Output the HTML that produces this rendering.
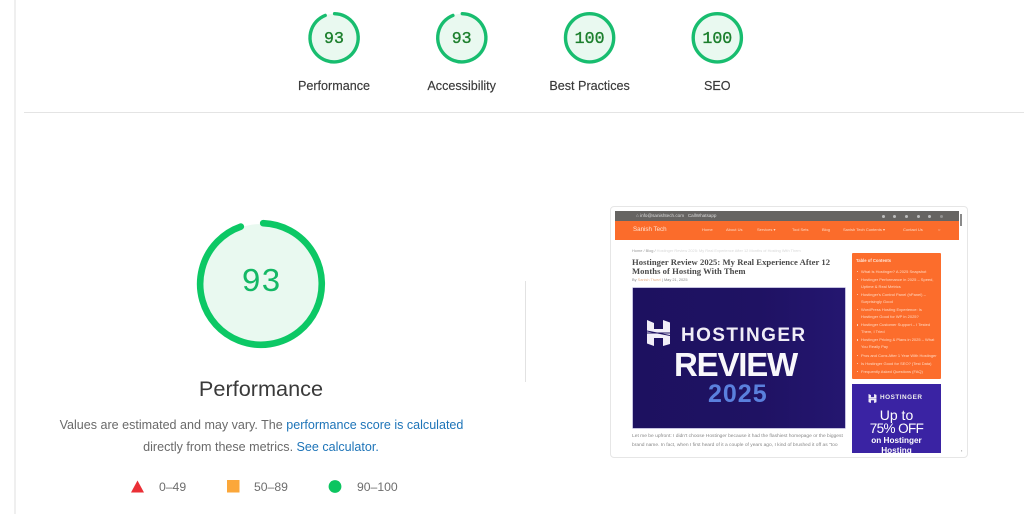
<!DOCTYPE html>
<html lang="en">
<head>
<meta charset="utf-8">
<title>Lighthouse scores</title>
<style>
html,body{margin:0;padding:0;background:#fff;width:1024px;height:514px;overflow:hidden}
body{position:relative;font-family:"Liberation Sans",sans-serif}
.a{position:absolute;white-space:nowrap}
.c{transform:translateX(-50%);text-align:center}
.lbl{font-size:12.6px;color:#3a3a3a;top:78px;line-height:16px;-webkit-text-stroke:.15px #3a3a3a}
.score{font-family:"Liberation Mono",monospace;font-size:16.6px;color:#1b7f2c;top:28px;line-height:20px;-webkit-text-stroke:.35px #1b7f2c}
.leg{font-size:12.2px;color:#6e6e6e;top:479px;line-height:16px}
.p{font-size:12.55px;color:#6a6a6a;line-height:20px}
.p span{color:#1d74b8}
#shot{position:absolute;left:610px;top:206px;width:356px;height:250px;border:1px solid #e6e6e6;border-radius:4px;background:#fff;overflow:hidden}
#in{position:absolute;left:-611px;top:-207px;width:1024px;height:514px;filter:blur(.35px)}
#in .a{line-height:1}
ul{position:absolute;margin:0;padding:0;list-style:none;left:857px;top:267.5px;width:80px;color:#ffd9c2;font-size:4px;line-height:7px}
li{padding-left:4px;margin-bottom:1.2px;position:relative}
li:before{content:"";position:absolute;left:0;top:3px;width:1.4px;height:1.4px;border-radius:50%;background:#ffe2cf}
.ic{position:absolute;top:214.5px;width:3px;height:3px;border-radius:50%;background:#bdbdbd}
</style>
</head>
<body>
<div class="a" style="left:14px;top:0;width:2px;height:514px;background:#efefef"></div>
<div class="a" style="left:24px;top:112px;width:1000px;height:1px;background:#e4e4e4"></div>
<div class="a" style="left:525px;top:281px;width:1px;height:101px;background:#e2e2e2"></div>

<svg class="a" style="left:0;top:0" width="1024" height="514" viewBox="0 0 1024 514">
  <g fill="#e9f9f0" stroke="none">
    <circle cx="334" cy="37.8" r="24"/><circle cx="461.7" cy="37.8" r="24"/><circle cx="589.6" cy="37.8" r="24"/><circle cx="717.3" cy="37.8" r="24"/>
    <circle cx="261" cy="284" r="60"/>
  </g>
  <g fill="none" stroke="#18bd6f" stroke-width="3.4" stroke-linecap="round">
    <path d="M334.6 13.7A24.1 24.1 0 1 1 325.2 15.4"/>
    <path d="M462.3 13.7A24.1 24.1 0 1 1 452.9 15.4"/>
    <circle cx="589.6" cy="37.8" r="24.1"/>
    <circle cx="717.3" cy="37.8" r="24.1"/>
  </g>
  <path d="M263.2 223.2A60.8 60.8 0 1 1 240.8 226.6" fill="none" stroke="#0cc865" stroke-width="6.6" stroke-linecap="round"/>
  <polygon points="137.5,480.5 144,492.5 131,492.5" fill="#ea2f36"/>
  <rect x="227" y="480" width="12.5" height="12.5" fill="#fba73a"/>
  <circle cx="335" cy="486.5" r="6.4" fill="#0cc560"/>
</svg>

<div class="a c score" style="left:334px;top:29px">93</div>
<div class="a c score" style="left:461.7px;top:29px">93</div>
<div class="a c score" style="left:589.6px;top:29px">100</div>
<div class="a c score" style="left:717.3px;top:29px">100</div>
<div class="a c lbl" style="left:334px">Performance</div>
<div class="a c lbl" style="left:461.7px">Accessibility</div>
<div class="a c lbl" style="left:589.6px">Best Practices</div>
<div class="a c lbl" style="left:717.3px">SEO</div>

<div class="a c" style="left:261px;top:264px;font-family:'Liberation Mono',monospace;font-size:33px;line-height:38px;color:#14b865">93</div>
<div class="a c" style="left:261px;top:376px;font-size:21.7px;line-height:26px;color:#3a3a3a">Performance</div>
<div class="a c p" style="left:261.5px;top:415px">Values are estimated and may vary. The <span>performance score is calculated</span></div>
<div class="a c p" style="left:261px;top:437px">directly from these metrics. <span>See calculator.</span></div>
<div class="a leg" style="left:159px">0–49</div>
<div class="a leg" style="left:254px">50–89</div>
<div class="a leg" style="left:357px">90–100</div>

<div id="shot"><div id="in">
  <div class="a" style="left:615px;top:211px;width:344px;height:10px;background:#666462"></div>
  <div class="a" style="left:615px;top:221px;width:344px;height:19px;background:#fb6c2b"></div>
  <div class="a" style="left:960px;top:214px;width:2px;height:12px;background:#8a8a8a"></div>
  <div class="a" style="left:636px;top:213.5px;font-size:4.6px;color:#dcdcdc">⌂ info@sanishtech.com &nbsp; CallWhatsapp</div>
  <div class="ic" style="left:882px"></div><div class="ic" style="left:893px"></div><div class="ic" style="left:905px"></div><div class="ic" style="left:917px"></div><div class="ic" style="left:928px"></div><div class="ic" style="left:940px;opacity:.5"></div>
  <div class="a" style="left:633px;top:227px;font-size:6.2px;color:#ffe3d2">Sanish Tech</div>
  <div class="a" style="left:702px;top:228px;font-size:4px;color:#ffd9c2">Home</div>
  <div class="a" style="left:726px;top:228px;font-size:4px;color:#ffd9c2">About Us</div>
  <div class="a" style="left:757px;top:228px;font-size:4px;color:#ffd9c2">Services ▾</div>
  <div class="a" style="left:792px;top:228px;font-size:4px;color:#ffd9c2">Tool Sets</div>
  <div class="a" style="left:822px;top:228px;font-size:4px;color:#ffd9c2">Blog</div>
  <div class="a" style="left:843px;top:228px;font-size:4px;color:#ffd9c2">Sanish Tech Contents ▾</div>
  <div class="a" style="left:903px;top:228px;font-size:4px;color:#ffd9c2">Contact Us</div>
  <div class="a" style="left:938px;top:228px;font-size:4px;color:#ffd9c2">○</div>

  <div class="a" style="left:632px;top:249px;font-size:3.9px;color:#999">Home / Blog / <span style="color:#d8d8d8">Hostinger Review 2025: My Real Experience After 12 Months of Hosting With Them</span></div>
  <div class="a" style="left:632px;top:258px;font-family:'Liberation Serif',serif;font-weight:700;font-size:8.6px;letter-spacing:.05px;color:#4a4a4a">Hostinger Review 2025: My Real Experience After 12</div>
  <div class="a" style="left:632px;top:267px;font-family:'Liberation Serif',serif;font-weight:700;font-size:8.6px;letter-spacing:.05px;color:#4a4a4a">Months of Hosting With Them</div>
  <div class="a" style="left:632px;top:278px;font-size:3.9px;color:#888">By <span style="color:#e8b58f">Sanish Tiwari</span> | May 21, 2025</div>

  <div class="a" style="left:633px;top:288px;width:212px;height:140px;background:linear-gradient(90deg,#1d1160,#1f1263 60%,#241670);box-shadow:0 0 0 .5px #8b84c0"></div>
  <svg class="a" style="left:647px;top:320px" width="23" height="26" viewBox="0 0 23 26">
    <path fill="#f1eef8" d="M0 0L7 3V9H16V0L23 2.5V12.5H0ZM0 13.5H23V24L16 26V18H7V26L0 23.5Z"/>
    <path fill="#1e1161" d="M0 10.5L23 15V16L0 11.5Z"/>
  </svg>
  <div class="a" style="left:681px;top:325.6px;font-size:19px;font-weight:700;color:#f0edf7;letter-spacing:1.4px">HOSTINGER</div>
  <div class="a" style="left:674px;top:348px;font-size:33px;font-weight:700;color:#f8f7fb;letter-spacing:-1.2px">REVIEW</div>
  <div class="a" style="left:708px;top:382px;font-size:25px;font-weight:700;color:#5a80dd;letter-spacing:1px">2025</div>
  <div class="a" style="left:632px;top:435px;font-size:4.9px;color:#888">Let me be upfront: I didn't choose Hostinger because it had the flashiest homepage or the biggest</div>
  <div class="a" style="left:632px;top:444px;font-size:4.9px;color:#888">brand name. In fact, when I first heard of it a couple of years ago, I kind of brushed it off as "too</div>

  <div class="a" style="left:852px;top:253px;width:89px;height:126px;background:#fc6d2c;border-radius:1px"></div>
  <div class="a" style="left:856px;top:258.5px;font-size:4.2px;font-weight:700;color:#ffe6d8">Table of Contents</div>
  <ul>
    <li>What Is Hostinger? A 2025 Snapshot</li>
    <li>Hostinger Performance in 2025 – Speed, Uptime &amp; Real Metrics</li>
    <li>Hostinger's Control Panel (hPanel) – Surprisingly Good</li>
    <li>WordPress Hosting Experience: Is Hostinger Good for WP in 2025?</li>
    <li>Hostinger Customer Support – I Tested Them, I Tried</li>
    <li>Hostinger Pricing &amp; Plans in 2025 – What You Really Pay</li>
    <li>Pros and Cons After 1 Year With Hostinger</li>
    <li>Is Hostinger Good for SEO? (Test Data)</li>
    <li>Frequently Asked Questions (FAQ)</li>
  </ul>

  <div class="a" style="left:852px;top:384px;width:89px;height:69px;background:#3a23a3;overflow:hidden;color:#fff;text-align:center">
    <svg class="a" style="left:16px;top:10px" width="9" height="9" viewBox="0 0 23 26"><path fill="#f1eef8" d="M0 0L7 3V9H16V0L23 2.5V12.5H0ZM0 13.5H23V24L16 26V18H7V26L0 23.5Z"/></svg>
    <div class="a" style="left:28px;top:11px;font-size:6.4px;font-weight:700;letter-spacing:.5px;color:#eee">HOSTINGER</div>
    <div class="a c" style="left:44.5px;top:24px;font-size:14px">Up to</div>
    <div class="a c" style="left:44.5px;top:38px;font-size:13.5px;letter-spacing:-.6px">75% OFF</div>
    <div class="a c" style="left:44.5px;top:52.5px;font-size:8.2px;font-weight:700">on Hostinger</div>
    <div class="a c" style="left:44.5px;top:63px;font-size:8.2px;font-weight:700">Hosting</div>
  </div>
  <div class="a" style="left:961px;top:449px;font-size:4px;color:#999">▪</div>
</div></div>
</body>
</html>
